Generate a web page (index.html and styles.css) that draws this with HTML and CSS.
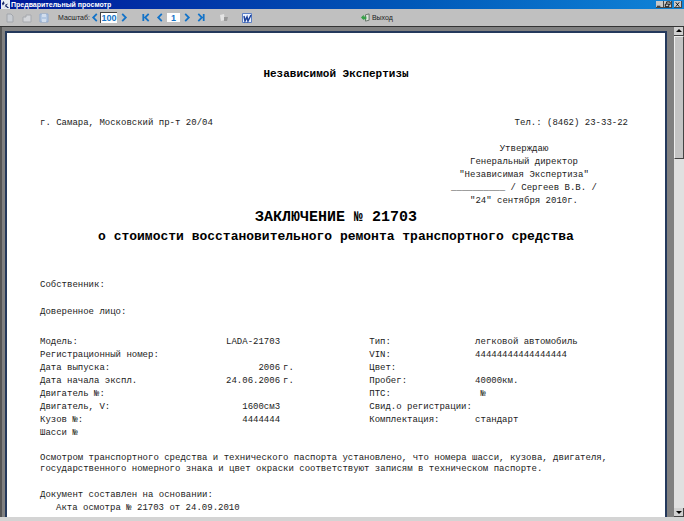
FILE: index.html
```html
<!DOCTYPE html>
<html lang="ru">

<head>
    <meta charset="UTF-8">
    <meta name="viewport" content="width=device-width, initial-scale=1.0">
    <title>Предварительный просмотр</title>
    <link rel="stylesheet" href="styles.css">
</head>

<body>
    <header class="titlebar">
        <svg class="app-icon" viewBox="0 0 10 10" aria-hidden="true">
            <rect width="10" height="10" fill="#e8ecf4"/>
            <path d="M1 4 L3 1 L4 4 L2 6z M4 9 L5 5 L8 4 L6 6 L9 9 L7 9 L5 7z" fill="#1a2a6a"/>
        </svg>
        <h1>Предварительный просмотр</h1>
        <div class="window-buttons">
            <button type="button" aria-label="Свернуть"><svg viewBox="0 0 8 7"><path d="M1 5.5h4" stroke="#000"/></svg></button>
            <button type="button" aria-label="Восстановить"><svg viewBox="0 0 8 7"><path d="M3 2.5v-2h4v3h-1M1.5 3h4v3h-4z" fill="none" stroke="#000"/></svg></button>
            <button type="button" class="close" aria-label="Закрыть"><svg viewBox="0 0 8 7"><path d="M2 1l4 5M6 1L2 6" stroke="#000"/></svg></button>
        </div>
    </header>

    <nav class="toolbar">
        <div class="group files">
            <button type="button" aria-label="Печать"><svg viewBox="0 0 12 12"><path d="M3 2h4l2 2v6H3z" fill="#c8ccd2" stroke="#a2a6ac"/></svg></button>
            <button type="button" aria-label="Открыть"><svg viewBox="0 0 12 12"><path d="M2 5h3V3h5v7H2z" fill="#d4d6da" stroke="#a6a9ae"/></svg></button>
            <button type="button" aria-label="Сохранить"><svg viewBox="0 0 12 12"><path d="M2 2h8v8H2z" fill="#b4c8e2" stroke="#91abd0"/><path d="M4 2h4v3H4zM4 7h4v3H4z" fill="#d2deee"/></svg></button>
        </div>
        <div class="group scale">
            <label for="scale">Масштаб:</label>
            <button type="button" class="less" aria-label="Уменьшить"><svg viewBox="0 0 8 10"><path d="M6 1L2 5l4 4"/></svg></button>
            <input id="scale" type="text" value="100">
            <button type="button" aria-label="Увеличить"><svg viewBox="0 0 8 10"><path d="M2 1l4 4-4 4"/></svg></button>
        </div>
        <div class="group pages">
            <button type="button" aria-label="Первая страница"><svg viewBox="0 0 8 10"><path d="M1 1v8M7 1L3 5l4 4"/></svg></button>
            <button type="button" aria-label="Предыдущая страница"><svg viewBox="0 0 8 10"><path d="M6 1L2 5l4 4"/></svg></button>
            <input id="page" type="text" value="1" aria-label="Страница">
            <button type="button" aria-label="Следующая страница"><svg viewBox="0 0 8 10"><path d="M2 1l4 4-4 4"/></svg></button>
            <button type="button" aria-label="Последняя страница"><svg viewBox="0 0 8 10"><path d="M1 1l4 4-4 4M7 1v8"/></svg></button>
        </div>
        <div class="group export">
            <button type="button" aria-label="Настройки"><svg viewBox="0 0 12 12"><path d="M2 3l4-1 1 6-4 1z" fill="#e4e4e4"/><path d="M6 5h4l-1 4H6z" fill="#999"/></svg></button>
            <button type="button" aria-label="Экспорт в Word"><svg viewBox="0 0 12 12"><path d="M1.5 1.5h9v9h-9z" fill="#edf3ff" stroke="#5c7fc4"/><path d="M3 4l1 5 2-4 1 4 3-6" fill="none" stroke="#1c429c" stroke-width="1.5"/></svg></button>
        </div>
        <button type="button" class="exit">
            <svg viewBox="0 0 10 10" aria-hidden="true"><path d="M5 2l4-1v7l-4 1z" fill="#dde5dd" stroke="#5f6f62"/><path d="M0 5l3-3v2h3v3H3v1z" fill="#36a047"/></svg>
            Выход
        </button>
    </nav>

    <main class="viewer">
        <div class="canvas">
            <article class="page">
                <p class="company">Независимой Экспертизы</p>
                <div class="contacts">
                    <span>г. Самара, Московский пр-т 20/04</span>
                    <span>Тел.: (8462) 23-33-22</span>
                </div>
                <div class="approval">
                    <p>Утверждаю</p>
                    <p>Генеральный директор</p>
                    <p>"Независимая Экспертиза"</p>
                    <p>__________ / Сергеев В.В. /</p>
                    <p>"24" сентября 2010г.</p>
                </div>
                <h2>ЗАКЛЮЧЕНИЕ № 21703</h2>
                <h3>о стоимости восстановительного ремонта транспортного средства</h3>
                <p class="person">Собственник:</p>
                <p class="person">Доверенное лицо:</p>
                <table class="details">
                    <colgroup>
                        <col class="col-name">
                        <col class="col-num">
                        <col class="col-unit">
                        <col class="col-label">
                        <col>
                    </colgroup>
                    <tr><th>Модель:</th><td class="num">LADA-21703</td><td class="unit"></td><th>Тип:</th><td>легковой автомобиль</td></tr>
                    <tr><th>Регистрационный номер:</th><td class="num"></td><td class="unit"></td><th>VIN:</th><td>44444444444444444</td></tr>
                    <tr><th>Дата выпуска:</th><td class="num">2006</td><td class="unit">г.</td><th>Цвет:</th><td></td></tr>
                    <tr><th>Дата начала экспл.</th><td class="num">24.06.2006</td><td class="unit">г.</td><th>Пробег:</th><td>40000км.</td></tr>
                    <tr><th>Двигатель №:</th><td class="num"></td><td class="unit"></td><th>ПТС:</th><td>&nbsp;№</td></tr>
                    <tr><th>Двигатель, V:</th><td class="num">1600см3</td><td class="unit"></td><th>Свид.о регистрации:</th><td></td></tr>
                    <tr><th>Кузов №:</th><td class="num">4444444</td><td class="unit"></td><th>Комплектация:</th><td>стандарт</td></tr>
                    <tr><th>Шасси №</th><td class="num"></td><td class="unit"></td><th></th><td></td></tr>
                </table>
                <p class="inspection">Осмотром транспортного средства и технического паспорта установлено, что номера шасси, кузова, двигателя,<br>государственного номерного знака и цвет окраски соответствуют записям в техническом паспорте.</p>
                <p class="basis">Документ составлен на основании:</p>
                <ul>
                    <li>Акта осмотра № 21703 от 24.09.2010</li>
                </ul>
            </article>
        </div>
        <div class="scrollbar">
            <button type="button" aria-label="Вверх"><svg viewBox="0 0 8 8"><path d="M4 2l3 3H1z"/></svg></button>
            <div class="thumb"></div>
            <button type="button" class="down" aria-label="Вниз"><svg viewBox="0 0 8 8"><path d="M4 6l3-3H1z"/></svg></button>
        </div>
    </main>
</body>

</html>
```

FILE: styles.css
```css
html,
body {
    margin: 0;
    padding: 0;
    height: 100%;
}

body {
    display: flex;
    flex-direction: column;
    box-sizing: border-box;
    padding-bottom: 4px;
    overflow: hidden;
    background: #d4d4d4;
    color: #222;
    font-family: "Liberation Sans", Arial, sans-serif;
    font-size: 7px;
}

h1,
h2,
h3,
p,
ul {
    margin: 0;
    padding: 0;
}

button {
    display: flex;
    align-items: center;
    justify-content: center;
    margin: 0;
    padding: 0;
    border: 0;
    background: none;
    font: inherit;
    color: inherit;
}

/* window title */
.titlebar {
    display: flex;
    align-items: center;
    flex: none;
    height: 9px;
    padding: 0 2px 0 1px;
    background: linear-gradient(to right, #00189a, #0058b8 60%, #1084d8);
    color: #fff;
}

.app-icon {
    width: 9px;
    height: 9px;
}

h1 {
    flex: 1;
    margin-left: 1px;
    font-size: 7px;
    line-height: 9px;
}

.window-buttons {
    display: flex;
}

.window-buttons button {
    width: 8px;
    height: 7px;
    background: #c8c8c8;
    border-right: 1px solid #444;
    border-bottom: 1px solid #444;
}

.window-buttons .close {
    margin-left: 2px;
}

.window-buttons svg {
    width: 8px;
    height: 7px;
}

/* toolbar */
.toolbar {
    display: flex;
    align-items: center;
    flex: none;
    height: 17px;
    padding-left: 4px;
    background: #c0c0c0;
    border-bottom: 1px solid #333;
}

.group {
    display: flex;
    align-items: center;
}

.files {
    gap: 5px;
}

.files svg,
.export svg {
    width: 12px;
    height: 12px;
}

.scale {
    margin-left: 8px;
}

.scale button,
.pages button {
    width: 14px;
}

.scale .less {
    width: 10px;
}

.scale svg,
.pages svg {
    width: 8px;
    height: 9px;
    fill: none;
    stroke: #1473c8;
    stroke-width: 2;
}

.toolbar input {
    box-sizing: border-box;
    width: 17px;
    height: 11px;
    margin: 0;
    padding: 0;
    border: 0;
    background: #fff;
    color: #1473c8;
    font: bold 9px "Liberation Sans", Arial, sans-serif;
    text-align: center;
}

.toolbar #scale {
    border-top: 1px solid #444;
    border-left: 1px solid #444;
}

.toolbar #page {
    width: 13px;
    height: 9px;
}

.pages {
    margin-left: 8px;
}

.export {
    gap: 11px;
    margin-left: 10px;
}

.exit {
    gap: 2px;
    margin-left: 108px;
}

.exit svg {
    width: 9px;
    height: 9px;
}

/* preview area */
.viewer {
    display: flex;
    flex: 1;
    min-height: 0;
    border-left: 2px solid #555;
}

.canvas {
    flex: 1;
    min-width: 0;
    padding: 4px 7px 0 3px;
    overflow: hidden;
    background: #808080;
}

.page {
    box-sizing: border-box;
    min-height: 100%;
    padding: 35px 33px 0;
    background: #fff;
    border: 2px solid #24395c;
    border-bottom: 0;
    font: 9px/13px "Liberation Mono", "Courier New", monospace;
}

.company {
    color: #000;
    font-size: 11px;
    font-weight: bold;
    text-align: center;
}

.contacts {
    display: flex;
    justify-content: space-between;
    margin-top: 36px;
    padding-right: 4px;
}

.approval {
    width: 168px;
    margin: 13px 24px 0 auto;
    text-align: center;
}

.approval p {
    white-space: nowrap;
}

h2,
h3 {
    color: #000;
    line-height: 19px;
    text-align: center;
}

h2 {
    font-size: 15px;
}

h3 {
    font-size: 13px;
}

.person {
    margin-top: 14px;
}

h3 + .person {
    margin-top: 33px;
}

.details {
    width: calc(100% - 4px);
    margin-top: 17px;
    border-collapse: collapse;
    table-layout: fixed;
}

.col-name {
    width: 23%;
}

.col-num,
.col-label {
    width: 18%;
}

.col-unit {
    width: 15%;
}

.details th,
.details td {
    height: 13px;
    padding: 0;
    font-weight: normal;
    text-align: left;
    white-space: nowrap;
}

.details .num {
    padding-right: 1px;
    text-align: right;
}

.details .unit {
    padding-left: 2px;
}

.inspection {
    margin-top: 13px;
    line-height: 11px;
    white-space: nowrap;
}

.basis {
    margin-top: 14px;
}

ul {
    padding-left: 16px;
    list-style: none;
}

/* scrollbar */
.scrollbar {
    display: flex;
    flex-direction: column;
    width: 10px;
    background: #e0e0e0;
}

.scrollbar button {
    flex: none;
    box-sizing: border-box;
    height: 9px;
    background: #d0d0d0;
    border-right: 1px solid #444;
    border-bottom: 1px solid #444;
}

.scrollbar svg {
    width: 8px;
    height: 8px;
}

.thumb {
    box-sizing: border-box;
    height: 25%;
    background: #c4c4c4;
    border: 1px solid #eee;
    border-right-color: #444;
    border-bottom-color: #444;
}

.scrollbar .down {
    margin-top: auto;
}
```
